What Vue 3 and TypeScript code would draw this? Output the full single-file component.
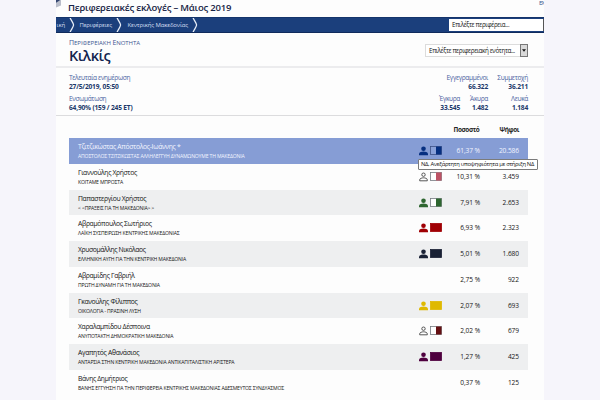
<script setup lang="ts">
interface Row {
  name: string
  party: string
  pct: string
  votes: string
  track: number
  color?: string
  half?: boolean
  outline?: boolean
}

const crumbs: string[] = ['ική', 'Περιφέρειες', 'Κεντρικής Μακεδονίας']

const rows: Row[] = [
  { name: 'Τζιτζικώστας Απόστολος-Ιωάννης *', party: 'ΑΠΟΣΤΟΛΟΣ ΤΖΙΤΖΙΚΩΣΤΑΣ ΑΛΛΗΛΕΓΓΥΗ ΔΥΝΑΜΩΝΟΥΜΕ ΤΗ ΜΑΚΕΔΟΝΙΑ', pct: '61,37 %', votes: '20.586', track: -0.36, color: '#062f80', half: true },
  { name: 'Γιαννούλης Χρήστος', party: 'ΚΟΙΤΑΜΕ ΜΠΡΟΣΤΑ', pct: '10,31 %', votes: '3.459', track: -0.4, color: '#bd5265', half: true, outline: true },
  { name: 'Παπαστεργίου Χρήστος', party: '< <ΠΡΑΞΕΙΣ ΓΙΑ ΤΗ ΜΑΚΕΔΟΝΙΑ> >', pct: '7,91 %', votes: '2.653', track: -0.38, color: '#2e6630', half: true },
  { name: 'Αβραμόπουλος Σωτήριος', party: 'ΛΑΪΚΗ ΣΥΣΠΕΙΡΩΣΗ ΚΕΝΤΡΙΚΗΣ ΜΑΚΕΔΟΝΙΑΣ', pct: '6,93 %', votes: '2.323', track: -0.38, color: '#a00004' },
  { name: 'Χρυσομάλλης Νικόλαος', party: 'ΕΛΛΗΝΙΚΗ ΑΥΓΗ ΓΙΑ ΤΗΝ ΚΕΝΤΡΙΚΗ ΜΑΚΕΔΟΝΙΑ', pct: '5,01 %', votes: '1.680', track: -0.43, color: '#192135' },
  { name: 'Αβραμίδης Γαβριήλ', party: 'ΠΡΩΤΗ ΔΥΝΑΜΗ ΓΙΑ ΤΗ ΜΑΚΕΔΟΝΙΑ', pct: '2,75 %', votes: '922', track: -0.4 },
  { name: 'Γκανούλης Φίλιππος', party: 'ΟΙΚΟΛΟΓΙΑ - ΠΡΑΣΙΝΗ ΛΥΣΗ', pct: '2,07 %', votes: '693', track: -0.4, color: '#dfb900' },
  { name: 'Χαραλαμπίδου Δέσποινα', party: 'ΑΝΥΠΟΤΑΚΤΗ ΔΗΜΟΚΡΑΤΙΚΗ ΜΑΚΕΔΟΝΙΑ', pct: '2,02 %', votes: '679', track: -0.39, color: '#651013', half: true, outline: true },
  { name: 'Αγαπητός Αθανάσιος', party: 'ΑΝΤΑΡΣΙΑ ΣΤΗΝ ΚΕΝΤΡΙΚΗ ΜΑΚΕΔΟΝΙΑ ΑΝΤΙΚΑΠΙΤΑΛΙΣΤΙΚΗ ΑΡΙΣΤΕΡΑ', pct: '1,27 %', votes: '425', track: -0.36, color: '#4f003f' },
  { name: 'Βάνης Δημήτριος', party: 'ΒΑΝΗΣ ΕΓΓΥΗΣΗ ΓΙΑ ΤΗΝ ΠΕΡΙΦΕΡΕΙΑ ΚΕΝΤΡΙΚΗΣ ΜΑΚΕΔΟΝΙΑΣ ΑΔΕΣΜΕΥΤΟΣ ΣΥΝΔΥΑΣΜΟΣ', pct: '0,37 %', votes: '125', track: -0.4 },
]
</script>

<template>
  <div class="screen">
    <div class="page">
      <header class="top">
        <svg class="logo" viewBox="0 0 6 8"><path d="M0 2L5 0V5.500L0 7.500Z" fill="#b9bdca" /><path d="M0 0H4.500L0 2.800Z" fill="#32446f" /></svg>
        <h1>Περιφερειακές εκλογές – Μάιος 2019</h1>
        <span class="lang">Ελ</span>
      </header>
      <nav class="bar">
        <div class="crumbs">
          <div v-for="c in crumbs" :key="c" class="crumb">
            <span>{{ c }}</span>
            <svg viewBox="0 0 6 16"><path d="M.8 0C1.800 3 4.200 5.500 4.600 8C4.200 10.500 1.800 13 .8 16" fill="none" stroke="#e8eef8" stroke-width="1.300" /></svg>
          </div>
        </div>
        <div class="region">Επιλέξτε περιφέρεια...</div>
      </nav>
      <section class="heading">
        <div>
          <div class="kicker"><b>Π</b>ΕΡΙΦΕΡΕΙΑΚΗ <b>Ε</b>ΝΟΤΗΤΑ</div>
          <h2>Κιλκίς</h2>
        </div>
        <div class="select">
          <span>Επιλέξτε περιφερειακή ενότητα...</span>
          <i><svg viewBox="0 0 4 3"><path d="M0 .3H4L2 2.800Z" fill="#111" /></svg></i>
        </div>
      </section>
      <section class="stats">
        <div class="left">
          <div class="stat"><span>Τελευταία ενημέρωση</span><b>27/5/2019, 05:50</b></div>
          <div class="stat"><span>Ενσωμάτωση</span><b>64,90% (159 / 245 ΕΤ)</b></div>
        </div>
        <div class="right">
          <div class="stat wide"><span>Εγγεγραμμένοι</span><b>66.322</b></div>
          <div class="stat"><span>Συμμετοχή</span><b>36.211</b></div>
          <div class="stat"><span>Έγκυρα</span><b>33.545</b></div>
          <div class="stat"><span>Άκυρα</span><b>1.482</b></div>
          <div class="stat"><span>Λευκά</span><b>1.184</b></div>
        </div>
      </section>
      <main class="results">
        <div class="thead"><span>Ποσοστό</span><span>Ψήφοι</span></div>
        <div v-for="(r, i) in rows" :key="r.name" class="row" :class="{ active: i === 0 }">
          <div class="who">
            <div class="name" :style="{ letterSpacing: r.track + 0.04 + 'px' }">{{ r.name }}</div>
            <div class="party">{{ r.party }}</div>
          </div>
          <div class="icons">
            <template v-if="r.color">
              <svg class="person" viewBox="0 0 9 10">
                <g v-if="r.outline" fill="#fff" stroke="#454545" stroke-width=".9">
                  <circle cx="4.500" cy="2.700" r="1.700" />
                  <path d="M.7 8.800V7.700C.7 6.500 3 5.800 4.500 5.800S8.300 6.500 8.300 7.700V8.800Z" />
                </g>
                <g v-else :fill="r.color">
                  <circle cx="4.500" cy="2.700" r="2.300" />
                  <path d="M0 9.300V8C0 6.400 2.800 5.600 4.500 5.600S9 6.400 9 8V9.300Z" />
                </g>
              </svg>
              <svg class="flag" viewBox="0 0 12 9">
                <rect x=".5" y=".5" width="11" height="8" :fill="r.half ? (i === 0 ? '#8aa1d8' : '#fff') : r.color" :stroke="r.half ? (i === 0 ? '#3d5286' : '#767b80') : r.color" stroke-width=".8" />
                <rect v-if="r.half" x="6" y=".5" width="5.500" height="8" :fill="r.color" />
              </svg>
            </template>
          </div>
          <div class="pct">{{ r.pct }}</div>
          <div class="votes">{{ r.votes }}</div>
          <div v-if="i === 0" class="tip">ΝΔ, Ανεξάρτητη υποψηφιότητα με στήριξη ΝΔ</div>
        </div>
      </main>
    </div>
  </div>
</template>

<style>
body { margin: 0; background: #f6f5fb; }
</style>

<style scoped>
* { box-sizing: border-box; }
.screen { width: 600px; height: 400px; overflow: hidden; background: #f6f5fb; font-family: "Open Sans", "Noto Sans", sans-serif; white-space: nowrap; color: #151515; }
.page { width: 488px; height: 400px; margin: 0 auto; background: #fdfdfd; overflow: hidden; }
.top { display: flex; height: 17px; align-items: flex-start; overflow: hidden; }
.logo { width: 6px; height: 8px; margin-right: 6px; flex: none; }
h1 { margin: 0; font-size: 9.500px; line-height: 15px; font-weight: 600; color: #172344; letter-spacing: -0.200px; }
.lang { margin-left: auto; font-size: 6px; line-height: 6px; letter-spacing: -0.800px; width: 5px; color: #35518e; }
.bar { height: 16px; display: flex; justify-content: space-between; align-items: center; background: #1b3f7c; border-top: 1px solid #15356b; border-bottom: 1px solid #102b5c; overflow: hidden; }
.crumbs { display: flex; height: 16px; }
.crumb { display: flex; align-items: center; justify-content: flex-end; font-size: 6px; color: #d5dff1; letter-spacing: -0.160px; }
.crumb svg { width: 6px; height: 16px; margin-left: 4px; flex: none; }
.crumb:nth-child(1) { width: 19px; }
.crumb:nth-child(2) { width: 47px; }
.crumb:nth-child(3) { width: 76px; }
.region { width: 95px; height: 12px; padding-left: 3px; background: #fff; border-right: 1px solid #555; font-size: 6.200px; line-height: 12px; color: #111; letter-spacing: -0.300px; }
.heading { height: 35px; padding: 6px 16px 0 13px; display: flex; justify-content: space-between; border-bottom: 2px solid #ececee; }
.kicker { font-size: 6px; line-height: 9px; height: 9px; color: #3e5791; letter-spacing: -0.040px; }
.kicker b { font-size: 7px; font-weight: 400; line-height: 1; }
h2 { margin: 0; font-size: 14.500px; line-height: 16px; color: #14254f; font-weight: 600; letter-spacing: -0.450px; }
.select { width: 103px; height: 13px; margin-top: 5px; display: flex; justify-content: space-between; border: 1px solid #dcdcdc; background: #fff; font-size: 6.300px; line-height: 11px; padding-left: 3px; color: #151515; letter-spacing: -0.370px; }
.select i { flex: none; width: 8px; height: 13px; margin: -1px -1px 0 0; background: #d9d9d9; border: 1px solid #777; display: flex; align-items: center; justify-content: center; }
.select svg { width: 4px; height: 3px; }
.stats { height: 48px; display: flex; justify-content: space-between; padding: 5px 16px 0 13px; border-bottom: 1px solid #dcdcde; font-size: 6.600px; }
.left, .right { line-height: 9px; }
.left { display: grid; gap: 3px; align-content: start; }
.right { display: grid; grid-template-columns: 28px 28px 40px; row-gap: 3px; align-content: start; text-align: right; justify-content: end; }
.wide { grid-column: 1 / 3; }
.stat span, .stat b { display: block; }
.stat span { color: #4a639f; letter-spacing: -0.350px; }
.stat b { color: #20386a; font-weight: 700; letter-spacing: -0.170px; }
.results { padding: 0 16px 0 13px; }
.thead { height: 22px; display: flex; justify-content: flex-end; padding: 9px 9px 0 0; font-size: 6.400px; line-height: 10px; font-weight: 700; color: #252525; letter-spacing: -0.370px; gap: 20px; }
.row { position: relative; height: 25.750px; display: flex; padding: 0 9px; }
.row:nth-child(even) { background: #869dd5; }
.row:nth-child(even) { background: #eeeff0; }
.row.active { background: #869dd5; color: #f2f5ff; }
.who { flex: 1; min-width: 0; padding-top: 4px; }
.name { font-size: 6.800px; line-height: 10px; }
.party { font-size: 5.100px; line-height: 9px; letter-spacing: -0.170px; }
.icons { width: 24px; height: 10px; margin-top: 8px; display: flex; gap: 2px; }
.person { width: 9px; height: 10px; }
.flag { width: 12px; height: 9px; }
.pct, .votes { font-size: 6.600px; line-height: 10px; padding-top: 8px; text-align: right; letter-spacing: -0.080px; }
.pct { width: 37px; }
.votes { width: 39px; }
.tip { position: absolute; z-index: 2; left: 349px; top: 21px; width: 120px; height: 11px; border: 1px solid #7b7b7b; border-radius: 1px; background: #fff; color: #111; font-size: 5.800px; line-height: 9px; padding-left: 2px; letter-spacing: -0.300px; }
</style>
